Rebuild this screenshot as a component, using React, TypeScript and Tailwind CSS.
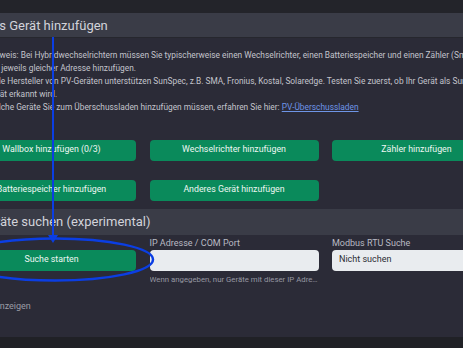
export default function App() {
  const buttonClass =
    "h-[21px] flex items-center justify-center rounded-[4px] bg-[#0a8a5b] text-[8.8px] text-[#eef7f2]";

  return (
    <div className="relative w-[463px] h-[348px] overflow-hidden bg-[#23242a] font-['Roboto',sans-serif]">
      <div className="h-[13px]" />

      <div className="ml-[-42px] w-[620px] bg-[#2b2b37]">
        {/* Geräte hinzufügen */}
        <div className="h-[25px] flex items-center bg-[#3a3c47] border-b border-[#26272e] pl-[11px]">
          <h2 className="text-[13px] text-[#d2d3da] whitespace-nowrap leading-none">
            Neues Gerät hinzufügen
          </h2>
        </div>

        <div className="pt-[11px] pl-[29px] text-[8.35px] leading-[12.9px] text-[#c3c4cc] whitespace-nowrap">
          <p>
            Hinweis: Bei Hybridwechselrichtern müssen Sie typischerweise einen Wechselrichter, einen
            Batteriespeicher und einen Zähler (Smartmeter)
          </p>
          <p>mit jeweils gleicher Adresse hinzufügen.</p>
          <p>
            Viele Hersteller von PV-Geräten unterstützen SunSpec, z.B. SMA, Fronius, Kostal,
            Solaredge. Testen Sie zuerst, ob Ihr Gerät als SunSpec
          </p>
          <p>Gerät erkannt wird.</p>
          <p>
            Welche Geräte Sie zum Überschussladen hinzufügen müssen, erfahren Sie hier:{" "}
            <a className="text-[#6e95e6] underline">PV-Überschussladen</a>
          </p>
        </div>

        <div className="pl-[9px] pt-[26px] w-[543px] grid grid-cols-3 gap-x-[13.5px] gap-y-[19px]">
          <button className={buttonClass}>Wallbox hinzufügen (0/3)</button>
          <button className={buttonClass}>Wechselrichter hinzufügen</button>
          <button className={buttonClass}>Zähler hinzufügen</button>
          <button className={buttonClass}>Batteriespeicher hinzufügen</button>
          <button className={buttonClass}>Anderes Gerät hinzufügen</button>
        </div>

        {/* Geräte suchen */}
        <div className="mt-[8px] h-[26px] flex items-center bg-[#3a3c47] pl-[22px]">
          <h2 className="text-[13px] text-[#d2d3da] whitespace-nowrap leading-none">
            Geräte suchen (experimental)
          </h2>
        </div>

        <div className="pl-[9px] w-[543px] grid grid-cols-3 gap-x-[13.5px]">
          <div className="pt-[15px]">
            <button className={buttonClass + " w-full"}>Suche starten</button>
          </div>
          <div>
            <label className="block h-[15px] pt-[1px] text-[9px] leading-[14px] text-[#b9bac3]">
              IP Adresse / COM Port
            </label>
            <input className="block w-full h-[21px] rounded-[4px] bg-[#e9ecef] outline-none" />
            <p className="mt-[3px] text-[7.8px] leading-[12px] text-[#9697a2] truncate">
              Wenn angegeben, nur Geräte mit dieser IP Adresse suchen
            </p>
          </div>
          <div>
            <label className="block h-[15px] pt-[1px] text-[9px] leading-[14px] text-[#b9bac3]">
              Modbus RTU Suche
            </label>
            <div className="h-[21px] flex items-center rounded-[4px] bg-[#e9ecef] pl-[7px] text-[9px] text-[#2b2c33]">
              Nicht suchen
            </div>
          </div>
        </div>

        <div className="pl-[7px] pt-[13px] pb-[24px] text-[9px] leading-[14px] text-[#9c9da7]">
          Details anzeigen
        </div>
      </div>

      <div className="h-[20px] bg-[#202126]" />

      <svg className="absolute inset-0 pointer-events-none" width="463" height="348">
        <line x1="53" y1="37" x2="53" y2="237" stroke="#0b3ee3" strokeWidth="2" />
        <polygon points="48,235 58,235 53,243" fill="#0b3ee3" />
        <ellipse cx="55" cy="259.5" rx="98" ry="21" fill="none" stroke="#0b3ee3" strokeWidth="2.5" />
      </svg>
    </div>
  );
}
